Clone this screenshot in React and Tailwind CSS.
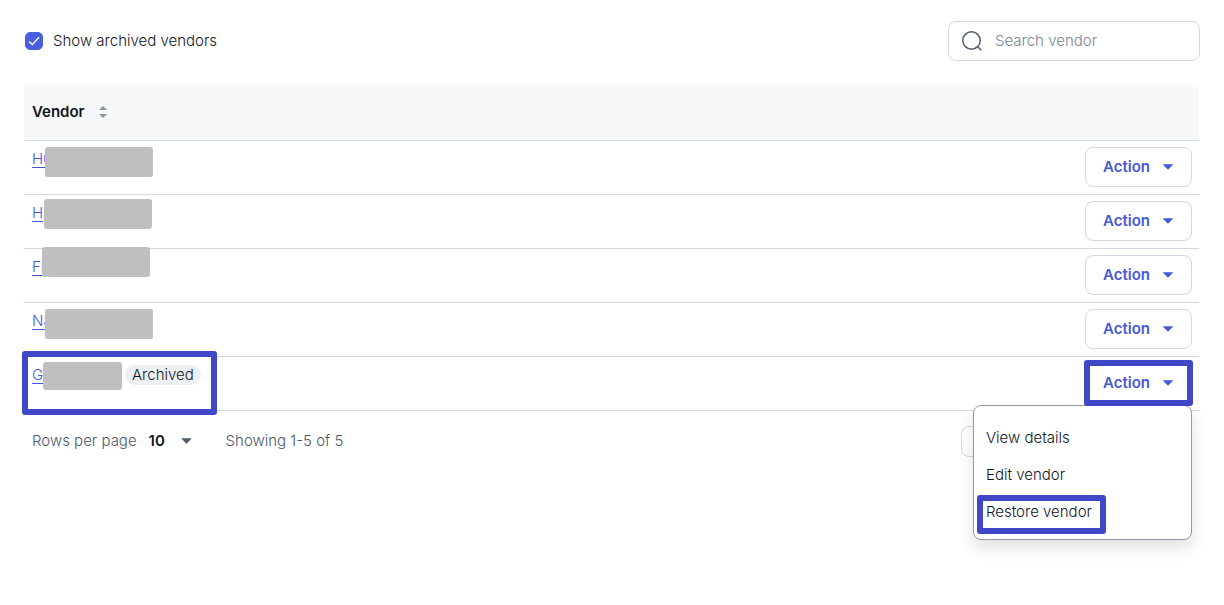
import React, { useState } from 'react';

const vendors = [
  { id: 1, name: 'Hu', mask: 'left-[21px] top-[6px] w-[108px] h-[30px]' },
  { id: 2, name: 'H', mask: 'left-[20px] top-[4px] w-[108px] h-[30px]' },
  { id: 3, name: 'Fi', mask: 'left-[18px] -top-[2px] w-[108px] h-[30px]' },
  { id: 4, name: 'Na', mask: 'left-[21px] top-[6px] w-[108px] h-[30px]' },
  { id: 5, name: 'G', mask: 'left-[19px] top-[5px] w-[79px] h-[28px]', archived: true },
];

const menuItems = ['View details', 'Edit vendor', 'Restore vendor'];

function Caret({ className }) {
  return (
    <svg viewBox="0 0 10 6" className={className} fill="currentColor" aria-hidden="true">
      <path d="M0.3 0.3h9.4c.3 0 .4.3.2.5L5.5 5.3a.7.7 0 0 1-1 0L.1.8C-.1.6 0 .3.3.3z" />
    </svg>
  );
}

// Thick outline that points out a part of the screen
function Highlight({ className }) {
  return <span className={`absolute pointer-events-none rounded-[3px] border-6 border-[#4048c8] ${className}`} />;
}

function ActionMenu() {
  return (
    <div
      role="menu"
      className="absolute right-[7px] top-12 z-10 w-[219px] rounded-lg border border-[#8f9baa] bg-white pt-[14px] pb-2 text-left shadow-[0_8px_16px_rgba(0,0,0,0.12)]"
    >
      {menuItems.map((item) => (
        <button
          key={item}
          type="button"
          role="menuitem"
          className="relative block h-[37px] w-full px-3 text-left text-[#10161f]"
        >
          {item}
          {item === 'Restore vendor' && <Highlight className="left-[3px] top-px h-[39px] w-[129px]" />}
        </button>
      ))}
    </div>
  );
}

function VendorRow({ vendor, open, onToggle }) {
  return (
    <tr className="border-b border-[#d1d8e0]">
      <td className="relative h-[54px] px-2 pt-2 align-top">
        <a href="#vendor" className="text-[#4558dc] underline underline-offset-3">
          {vendor.name}
        </a>
        <span className={`absolute rounded-[3px] bg-[#bfbfbf] ${vendor.mask}`} />
        {vendor.archived && (
          <>
            <span className="absolute left-[101px] top-2 rounded-full bg-[#ecf0f3] px-[7px] text-[#10161f]">
              Archived
            </span>
            <Highlight className="-left-[2px] -top-[6px] h-[64px] w-[195px]" />
          </>
        )}
      </td>
      <td className="relative w-[122px] pl-2 pr-[7px] pt-[6px] align-top">
        <button
          type="button"
          aria-haspopup="menu"
          aria-expanded={open}
          onClick={onToggle}
          className="flex h-10 w-full items-center justify-between rounded-lg border border-[#d1d8e0] bg-white pl-[17px] pr-[18px] font-semibold text-[#4558dc]"
        >
          Action
          <Caret className="h-[6px] w-[10px]" />
        </button>
        {open && <ActionMenu />}
        {vendor.archived && <Highlight className="right-[6px] top-[3px] z-20 h-[46px] w-[109px]" />}
      </td>
    </tr>
  );
}

function App() {
  const [showArchived, setShowArchived] = useState(true);
  const [openId, setOpenId] = useState(5);
  const rows = vendors.filter((v) => showArchived || !v.archived);

  return (
    <div className="min-h-screen bg-white px-6 pt-[21px] font-['Inter',sans-serif] text-[15px] leading-5 font-light text-[#10161f]">
      <header className="flex items-center justify-between">
        <label className="flex items-center gap-[10px] pl-px">
          <span className="relative flex">
            <input
              type="checkbox"
              checked={showArchived}
              onChange={(e) => setShowArchived(e.target.checked)}
              className="size-[18px] appearance-none rounded-[5px] border border-[#4a5fe0] bg-white checked:bg-[#4a5fe0]"
            />
            {showArchived && (
              <svg viewBox="0 0 18 18" className="pointer-events-none absolute inset-0" fill="none" stroke="white" strokeWidth="1.4">
                <path d="M4.2 9.4l3.2 3.2 6.6-7.3" />
              </svg>
            )}
          </span>
          Show archived vendors
        </label>
        <label className="flex h-10 w-[252px] items-center gap-[13px] rounded-lg border border-[#d1d8e0] px-[13px]">
          <svg viewBox="0 0 20 20" className="size-5 shrink-0" fill="none" stroke="#515d6e" strokeWidth="1.5" aria-hidden="true">
            <circle cx="9.5" cy="9.5" r="8.7" />
            <path d="M15.8 15.8l3.5 3.5" />
          </svg>
          <input
            type="text"
            aria-label="Search vendor"
            placeholder="Search vendor"
            className="w-full min-w-0 bg-transparent outline-none placeholder:text-[#77849a]"
          />
        </label>
      </header>

      <main className="mt-6 mr-px">
        <table className="w-full border-collapse">
          <thead>
            <tr className="border-b border-[#d1d8e0] bg-[#f7f8fa]">
              <th scope="col" className="h-[55px] px-2 text-left font-semibold text-[#10161f]">
                <button type="button" className="flex items-center gap-[14px]">
                  Vendor
                  <svg viewBox="0 0 8 12" className="h-3 w-2" fill="#8793a5" aria-hidden="true">
                    <path d="M4 0l4 4H0z M4 12l4-4H0z" />
                  </svg>
                </button>
              </th>
              <th scope="col" aria-label="Actions" />
            </tr>
          </thead>
          <tbody>
            {rows.map((vendor) => (
              <VendorRow
                key={vendor.id}
                vendor={vendor}
                open={openId === vendor.id}
                onToggle={() => setOpenId(openId === vendor.id ? null : vendor.id)}
              />
            ))}
          </tbody>
        </table>

        <footer className="mt-[15px] flex h-[31px] items-center px-2 text-[#4d596b]">
          <label htmlFor="rows-per-page">Rows per page</label>
          <span className="relative ml-3 flex items-center">
            <select id="rows-per-page" defaultValue="10" className="w-[43px] appearance-none bg-transparent font-semibold text-[#10161f]">
              <option>10</option>
              <option>25</option>
              <option>50</option>
            </select>
            <Caret className="pointer-events-none absolute right-0 h-[6px] w-[11px]" />
          </span>
          <span className="ml-[34px]">Showing 1-5 of 5</span>
          <nav aria-label="Pages" className="ml-auto flex w-[230px] gap-2">
            <button type="button" aria-label="Previous page" className="h-[31px] flex-1 rounded-lg border border-[#d1d8e0]" />
            <button type="button" aria-label="Next page" className="mr-2 h-[31px] flex-1 rounded-lg border border-[#d1d8e0]" />
          </nav>
        </footer>
      </main>
    </div>
  );
}

export default App;
